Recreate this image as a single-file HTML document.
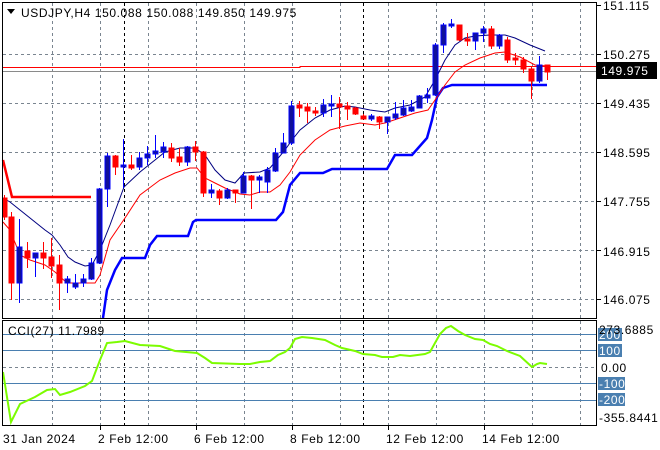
<!DOCTYPE html>
<html><head><meta charset="utf-8"><style>
html,body{margin:0;padding:0;background:#fff;}
svg{display:block;font-family:"Liberation Sans",sans-serif;font-size:12px;letter-spacing:0.6px;}
</style></head><body>
<svg width="660" height="450" xmlns="http://www.w3.org/2000/svg">
<rect width="660" height="450" fill="#fff"/>
<g stroke="#7a8590" stroke-dasharray="3,3" stroke-width="1">
<line x1="52.5" y1="3" x2="52.5" y2="318"/><line x1="100.5" y1="3" x2="100.5" y2="318"/><line x1="148.5" y1="3" x2="148.5" y2="318"/><line x1="196.5" y1="3" x2="196.5" y2="318"/><line x1="244.5" y1="3" x2="244.5" y2="318"/><line x1="292.5" y1="3" x2="292.5" y2="318"/><line x1="340.5" y1="3" x2="340.5" y2="318"/><line x1="388.5" y1="3" x2="388.5" y2="318"/><line x1="436.5" y1="3" x2="436.5" y2="318"/><line x1="484.5" y1="3" x2="484.5" y2="318"/><line x1="532.5" y1="3" x2="532.5" y2="318"/><line x1="580.5" y1="3" x2="580.5" y2="318"/>
<line x1="3" y1="54.5" x2="596" y2="54.5"/><line x1="3" y1="103.5" x2="596" y2="103.5"/><line x1="3" y1="152.5" x2="596" y2="152.5"/><line x1="3" y1="201.5" x2="596" y2="201.5"/><line x1="3" y1="250.5" x2="596" y2="250.5"/><line x1="3" y1="299.5" x2="596" y2="299.5"/>
<line x1="52.5" y1="321" x2="52.5" y2="425"/><line x1="100.5" y1="321" x2="100.5" y2="425"/><line x1="148.5" y1="321" x2="148.5" y2="425"/><line x1="196.5" y1="321" x2="196.5" y2="425"/><line x1="244.5" y1="321" x2="244.5" y2="425"/><line x1="292.5" y1="321" x2="292.5" y2="425"/><line x1="340.5" y1="321" x2="340.5" y2="425"/><line x1="388.5" y1="321" x2="388.5" y2="425"/><line x1="436.5" y1="321" x2="436.5" y2="425"/><line x1="484.5" y1="321" x2="484.5" y2="425"/><line x1="532.5" y1="321" x2="532.5" y2="425"/><line x1="580.5" y1="321" x2="580.5" y2="425"/>
<line x1="3" y1="367.5" x2="596" y2="367.5"/>
</g>
<g stroke="#000" stroke-dasharray="3,3"><line x1="124.5" y1="3" x2="124.5" y2="425"/><line x1="363.5" y1="3" x2="363.5" y2="425"/></g>
<g stroke="#4a7fb0" stroke-width="1"><line x1="3" y1="334.5" x2="596" y2="334.5"/><line x1="3" y1="350.5" x2="596" y2="350.5"/><line x1="3" y1="383.5" x2="596" y2="383.5"/><line x1="3" y1="400.5" x2="596" y2="400.5"/></g>
<line x1="3" y1="71.5" x2="596" y2="71.5" stroke="#8a8a8a"/>
<polyline points="3,67.5 300,67.5 300,66.5 596,66.5" fill="none" stroke="#f00"/>
<polyline points="3,160 12,197 91,197" fill="none" stroke="#f00" stroke-width="2.5"/>
<polyline points="103,318 107,290 115,270 122,258 145,258 150,245 157,236 188,236 193,222 196,220 276,220 283,212 290,185 300,173 323,173 332,169 387,169 395,155 412,155 427,138 432,120 437,97 443,88 452,85 547,85" fill="none" stroke="#0000ff" stroke-width="2.5"/>
<polyline points="3,198 10,202 20,210 35,222 45,230 52,235 60,245 68,257 75,262 85,266 92,265 100,250 110,225 124,187 140,172 155,160 165,152 180,148 195,148 205,155 215,170 225,180 235,183 244,173 260,172 270,168 285,150 292,140 300,130 315,118 330,110 345,106 355,107 370,110 385,112 395,108 410,105 425,97 435,80 445,60 455,45 465,38 475,36 490,35 505,35 515,38 530,45 545,51" fill="none" stroke="#000080" stroke-width="1"/>
<polyline points="3,222 10,230 20,255 30,260 45,265 55,272 67,283 80,283 95,283 100,275 110,240 125,218 140,195 160,180 175,173 190,168 197,168 205,178 215,183 225,188 240,194 250,195 260,192 270,192 280,185 290,172 300,155 315,140 330,130 345,126 360,123 375,125 385,123 400,118 415,113 428,110 435,100 445,85 455,72 465,65 480,58 495,53 505,52 520,57 535,65 547,66" fill="none" stroke="#f00" stroke-width="1"/>
<g stroke-width="1">
<g stroke="#f00" fill="#f00">
<line x1="4.5" y1="195" x2="4.5" y2="220"/><rect x="3" y="198" width="4" height="19"/>
<line x1="11.5" y1="212" x2="11.5" y2="300"/><rect x="9" y="217" width="5" height="66"/>
<line x1="27.5" y1="242" x2="27.5" y2="268"/><rect x="25" y="251" width="5" height="7"/>
<line x1="43.5" y1="242" x2="43.5" y2="269"/><rect x="41" y="253" width="5" height="5"/>
<line x1="51.5" y1="238" x2="51.5" y2="278"/><rect x="49" y="257" width="5" height="9"/>
<line x1="59.5" y1="255" x2="59.5" y2="310"/><rect x="57" y="265" width="5" height="18"/>
<line x1="115.5" y1="155" x2="115.5" y2="175"/><rect x="113" y="156" width="5" height="11"/>
<line x1="131.5" y1="155" x2="131.5" y2="170"/><rect x="129" y="165" width="5" height="3"/>
<line x1="171.5" y1="143" x2="171.5" y2="162"/><rect x="169" y="148" width="5" height="10"/>
<line x1="179.5" y1="148" x2="179.5" y2="166"/><rect x="177" y="157" width="5" height="5"/>
<line x1="195.5" y1="141" x2="195.5" y2="161"/><rect x="193" y="147" width="5" height="5"/>
<line x1="203.5" y1="151" x2="203.5" y2="197"/><rect x="201" y="152" width="5" height="41"/>
<line x1="219.5" y1="189" x2="219.5" y2="205"/><rect x="217" y="191" width="5" height="7"/>
<line x1="235.5" y1="190" x2="235.5" y2="203"/><rect x="233" y="190" width="5" height="3"/>
<line x1="251.5" y1="175" x2="251.5" y2="209"/><rect x="249" y="176" width="5" height="4"/>
<line x1="299.5" y1="101" x2="299.5" y2="117"/><rect x="297" y="105" width="5" height="3"/>
<line x1="307.5" y1="103" x2="307.5" y2="123"/><rect x="305" y="107" width="5" height="4"/>
<line x1="315.5" y1="107" x2="315.5" y2="116"/><rect x="313" y="111" width="5" height="2"/>
<line x1="339.5" y1="97" x2="339.5" y2="129"/><rect x="337" y="104" width="5" height="3"/>
<line x1="347.5" y1="102" x2="347.5" y2="120"/><rect x="345" y="106" width="5" height="3"/>
<line x1="355.5" y1="107" x2="355.5" y2="115"/><rect x="353" y="108" width="5" height="6"/>
<line x1="363.5" y1="114" x2="363.5" y2="119"/><rect x="361" y="116" width="5" height="3"/>
<line x1="379.5" y1="116" x2="379.5" y2="129"/><rect x="377" y="117" width="5" height="5"/>
<line x1="459.5" y1="25" x2="459.5" y2="41"/><rect x="457" y="25" width="5" height="15"/>
<line x1="467.5" y1="33" x2="467.5" y2="46"/><rect x="465" y="39" width="5" height="2"/>
<line x1="491.5" y1="26" x2="491.5" y2="49"/><rect x="489" y="29" width="5" height="17"/>
<line x1="507.5" y1="37" x2="507.5" y2="63"/><rect x="505" y="40" width="5" height="20"/>
<line x1="515.5" y1="53" x2="515.5" y2="65"/><rect x="513" y="58" width="5" height="2"/>
<line x1="523.5" y1="57" x2="523.5" y2="73"/><rect x="521" y="60" width="5" height="9"/>
<line x1="531.5" y1="67" x2="531.5" y2="99"/><rect x="529" y="69" width="5" height="12"/>
<line x1="547.5" y1="65" x2="547.5" y2="80"/><rect x="545" y="65" width="5" height="7"/>
</g>
<g stroke="#0000ff" fill="#10109a">
<line x1="19.5" y1="219" x2="19.5" y2="303"/><rect x="17" y="247" width="5" height="36"/>
<line x1="35.5" y1="253" x2="35.5" y2="277"/><rect x="33" y="253" width="5" height="5"/>
<line x1="67.5" y1="276" x2="67.5" y2="293"/><rect x="65" y="279" width="5" height="4"/>
<line x1="75.5" y1="274" x2="75.5" y2="289"/><rect x="73" y="283" width="5" height="4"/>
<line x1="83.5" y1="274" x2="83.5" y2="287"/><rect x="81" y="279" width="5" height="4"/>
<line x1="91.5" y1="258" x2="91.5" y2="280"/><rect x="89" y="263" width="5" height="16"/>
<line x1="99.5" y1="188" x2="99.5" y2="264"/><rect x="97" y="189" width="5" height="74"/>
<line x1="107.5" y1="153" x2="107.5" y2="207"/><rect x="105" y="156" width="5" height="33"/>
<line x1="123.5" y1="139" x2="123.5" y2="188"/><rect x="121" y="165" width="5" height="2"/>
<line x1="139.5" y1="152" x2="139.5" y2="170"/><rect x="137" y="158" width="5" height="9"/>
<line x1="147.5" y1="146" x2="147.5" y2="165"/><rect x="145" y="154" width="5" height="4"/>
<line x1="155.5" y1="135" x2="155.5" y2="158"/><rect x="153" y="151" width="5" height="3"/>
<line x1="163.5" y1="142" x2="163.5" y2="158"/><rect x="161" y="147" width="5" height="5"/>
<line x1="187.5" y1="146" x2="187.5" y2="166"/><rect x="185" y="147" width="5" height="15"/>
<line x1="211.5" y1="184" x2="211.5" y2="198"/><rect x="209" y="190" width="5" height="3"/>
<line x1="227.5" y1="188" x2="227.5" y2="199"/><rect x="225" y="190" width="5" height="8"/>
<line x1="243.5" y1="172" x2="243.5" y2="193"/><rect x="241" y="176" width="5" height="17"/>
<line x1="259.5" y1="175" x2="259.5" y2="193"/><rect x="257" y="177" width="5" height="3"/>
<line x1="267.5" y1="167" x2="267.5" y2="193"/><rect x="265" y="170" width="5" height="12"/>
<line x1="275.5" y1="148" x2="275.5" y2="172"/><rect x="273" y="153" width="5" height="18"/>
<line x1="283.5" y1="133" x2="283.5" y2="153"/><rect x="281" y="143" width="5" height="10"/>
<line x1="291.5" y1="101" x2="291.5" y2="145"/><rect x="289" y="106" width="5" height="37"/>
<line x1="323.5" y1="99" x2="323.5" y2="117"/><rect x="321" y="105" width="5" height="8"/>
<line x1="331.5" y1="95" x2="331.5" y2="117"/><rect x="329" y="104" width="5" height="2"/>
<line x1="371.5" y1="114" x2="371.5" y2="121"/><rect x="369" y="116" width="5" height="3"/>
<line x1="387.5" y1="117" x2="387.5" y2="134"/><rect x="385" y="117" width="5" height="5"/>
<line x1="395.5" y1="102" x2="395.5" y2="120"/><rect x="393" y="114" width="5" height="4"/>
<line x1="403.5" y1="100" x2="403.5" y2="116"/><rect x="401" y="108" width="5" height="7"/>
<line x1="411.5" y1="100" x2="411.5" y2="112"/><rect x="409" y="107" width="5" height="4"/>
<line x1="419.5" y1="95" x2="419.5" y2="108"/><rect x="417" y="96" width="5" height="12"/>
<line x1="427.5" y1="88" x2="427.5" y2="103"/><rect x="425" y="95" width="5" height="3"/>
<line x1="435.5" y1="43" x2="435.5" y2="96"/><rect x="433" y="45" width="5" height="50"/>
<line x1="443.5" y1="23" x2="443.5" y2="53"/><rect x="441" y="25" width="5" height="20"/>
<line x1="451.5" y1="19" x2="451.5" y2="28"/><rect x="449" y="24" width="5" height="2"/>
<line x1="475.5" y1="33" x2="475.5" y2="50"/><rect x="473" y="33" width="5" height="8"/>
<line x1="483.5" y1="26" x2="483.5" y2="42"/><rect x="481" y="29" width="5" height="4"/>
<line x1="499.5" y1="34" x2="499.5" y2="49"/><rect x="497" y="35" width="5" height="11"/>
<line x1="539.5" y1="56" x2="539.5" y2="83"/><rect x="537" y="65" width="5" height="16"/>
</g>
</g>
<polyline points="3,372 11,422 20,404 35,397 47,390 55,389 60,395 70,392 85,386 92,381 100,360 107,343 117,342 125,341 140,345 160,346 175,351 197,353 205,358 212,363 240,364 250,364 260,362 270,361 278,355 285,352 290,348 295,339 302,337 312,338 325,340 335,345 342,348 355,351 363,354 375,355 382,357 393,357 400,355 410,356 425,354 430,352 440,334 446,328 451,326 458,331 465,335 475,339 483,340 490,344 497,346 507,351 520,356 532,367 537,364 540,363 547,364" fill="none" stroke="#7cfc00" stroke-width="2"/>
<rect x="2.5" y="2.5" width="594" height="316" fill="none" stroke="#000"/>
<rect x="2.5" y="320.5" width="594" height="105" fill="none" stroke="#000"/>
<g stroke="#000"><line x1="597" y1="5.5" x2="601" y2="5.5"/><line x1="597" y1="54.5" x2="601" y2="54.5"/><line x1="597" y1="103.5" x2="601" y2="103.5"/><line x1="597" y1="152.5" x2="601" y2="152.5"/><line x1="597" y1="201.5" x2="601" y2="201.5"/><line x1="597" y1="250.5" x2="601" y2="250.5"/><line x1="597" y1="299.5" x2="601" y2="299.5"/>
<line x1="100.5" y1="426" x2="100.5" y2="430"/><line x1="196.5" y1="426" x2="196.5" y2="430"/><line x1="292.5" y1="426" x2="292.5" y2="430"/><line x1="388.5" y1="426" x2="388.5" y2="430"/><line x1="484.5" y1="426" x2="484.5" y2="430"/></g>
<g fill="#000">
<text x="603" y="10">151.115</text><text x="603" y="59">150.275</text><text x="603" y="108">149.435</text><text x="603" y="157">148.595</text><text x="603" y="206">147.755</text><text x="603" y="256">146.915</text><text x="603" y="304">146.075</text>
</g>
<rect x="597" y="62" width="60" height="17" fill="#000"/>
<text x="601" y="75" fill="#fff">149.975</text>
<g fill="#4a7fb0"><rect x="598" y="328" width="24" height="13"/><rect x="598" y="344" width="24" height="13"/><rect x="598" y="377" width="27" height="13"/><rect x="598" y="393" width="27" height="13"/></g>
<g fill="#fff"><text x="599" y="339">200</text><text x="599" y="355">100</text><text x="599" y="388">-100</text><text x="599" y="404">-200</text></g>
<text x="599" y="334" fill="#000">273.6885</text>
<text x="601" y="372" fill="#000">0.00</text>
<text x="599" y="422" fill="#000">-355.8441</text>
<text x="8" y="335" fill="#000">CCI(27) 11.7989</text>
<path d="M7,9 L15,9 L11,14 Z" fill="#000"/>
<text x="21" y="17" fill="#000">USDJPY,H4  150.088 150.088 149.850 149.975</text>
<g fill="#000"><text x="3" y="443">31 Jan 2024</text><text x="98" y="443">2 Feb 12:00</text><text x="194" y="443">6 Feb 12:00</text><text x="290" y="443">8 Feb 12:00</text><text x="386" y="443">12 Feb 12:00</text><text x="482" y="443">14 Feb 12:00</text></g>
</svg>
</body></html>
